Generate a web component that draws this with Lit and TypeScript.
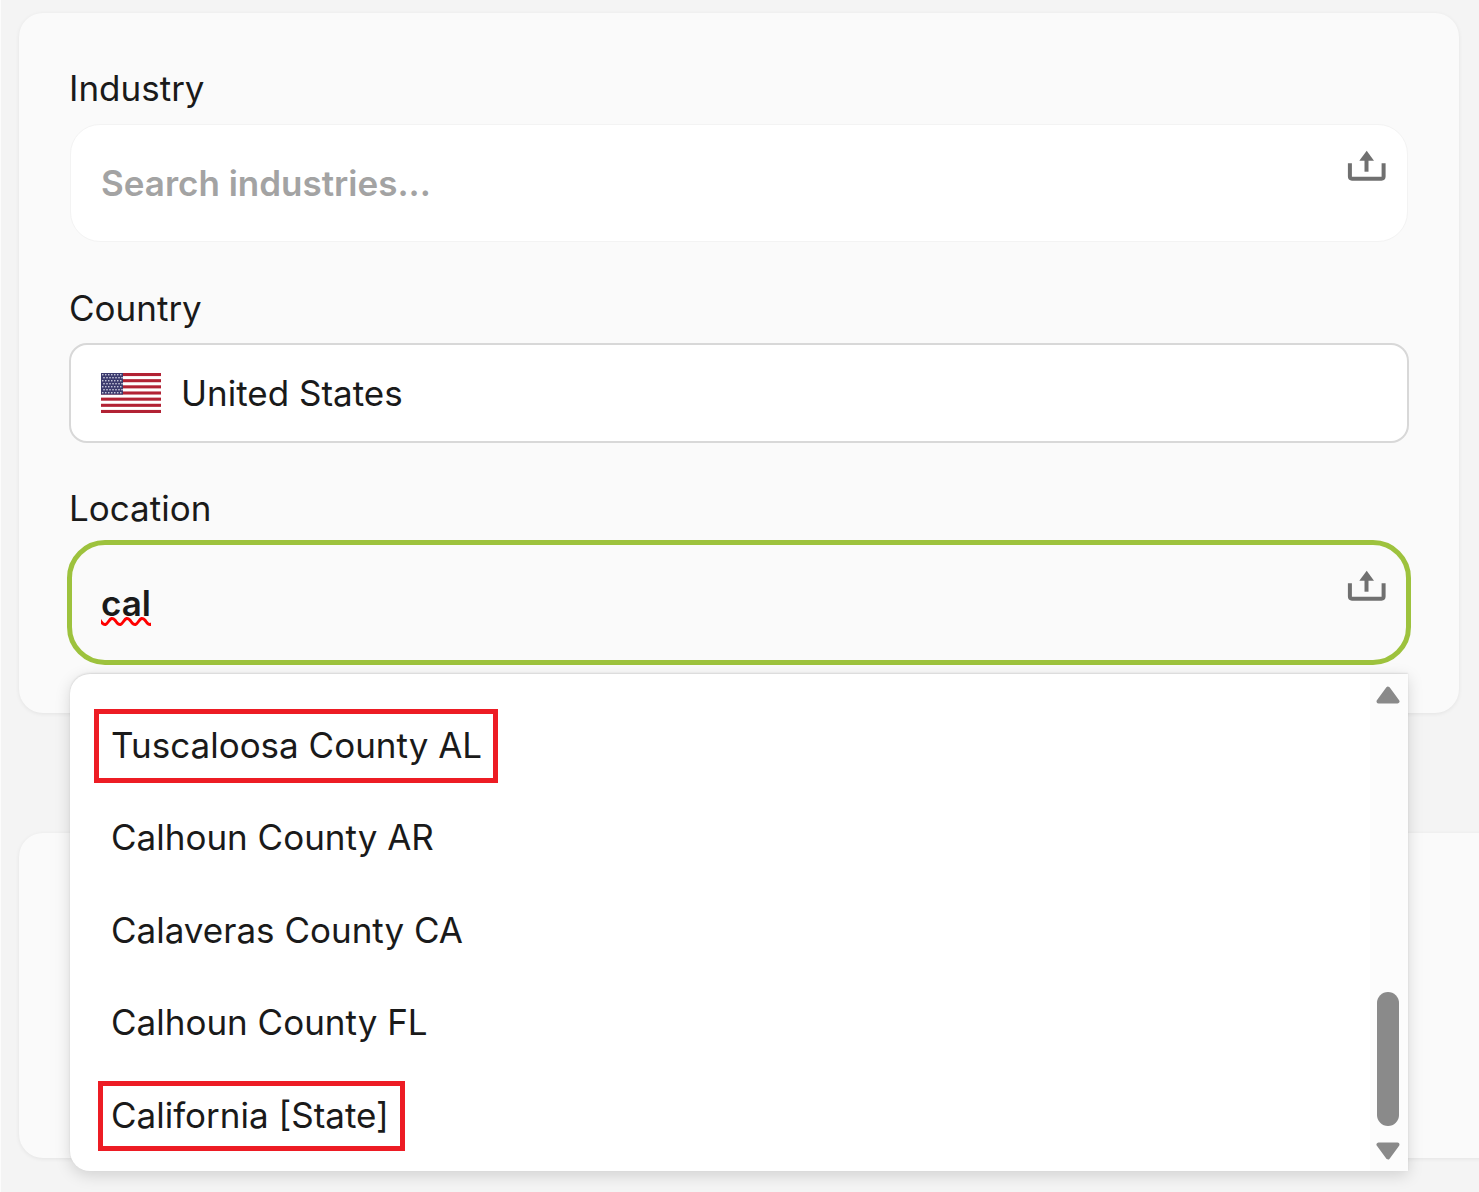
import { LitElement, html, css, svg } from "lit";
import { customElement } from "lit/decorators.js";

const uploadIcon = html`<svg class="upload" width="40" height="32" viewBox="0 0 40 32">
  <path d="M19.7 0.7 L27 10.7 H12.3 Z" fill="#707070" />
  <rect x="17.5" y="10" width="4" height="11.7" fill="#707070" />
  <path d="M2.9 13.3 V26.6 Q2.9 28.7 5 28.7 H34.5 Q36.6 28.7 36.6 26.6 V13.3" fill="none" stroke="#707070" stroke-width="4" />
</svg>`;

const stripes = [0, 1, 2, 3, 4, 5, 6];
const starRows = [0, 1, 2, 3, 4, 5, 6];

const usFlag = html`<svg class="flag" width="60" height="40" viewBox="0 0 60 40">
  <rect width="60" height="40" fill="#fff" />
  ${stripes.map(i => svg`<rect y=${i * 6.154} width="60" height="3.077" fill="#b22234" />`)}
  <rect width="22" height="21.6" fill="#3c3b6e" />
  ${starRows.map(r =>
    starRows.map(
      c => svg`<circle cx=${1.8 + c * 3 + (r % 2) * 1.2} cy=${1.8 + r * 3} r="0.8" fill="#e4e4f0" />`
    )
  )}
</svg>`;

@customElement("app-root")
class AppRoot extends LitElement {
  static styles = css`
    :host {
      display: block;
      width: 1479px;
      height: 1192px;
      overflow: hidden;
      position: relative;
      background: #f4f4f4;
      border-left: 1px solid #fcfcfc;
      box-sizing: border-box;
      font-family: Inter, "Liberation Sans", sans-serif;
      color: #1a1a1a;
    }

    * {
      box-sizing: border-box;
    }

    .page {
      display: flex;
      flex-direction: column;
      gap: 120px;
      padding: 13px 0 0 18px;
    }

    .card {
      background: #fafafa;
      border-radius: 24px;
      box-shadow: 0 1px 4px rgba(0, 0, 0, 0.07);
    }

    .form {
      width: 1440px;
      height: 700px;
      padding: 54px 50px 0 51px;
      position: relative;
    }

    .second {
      width: 1480px;
      height: 325px;
      border-radius: 24px 0 0 24px;
    }

    .label {
      font-size: 35px;
      line-height: 42px;
      height: 42px;
      margin-left: -1px;
    }

    .field {
      display: flex;
      margin-top: 14px;
      position: relative;
      font-size: 35px;
    }

    .search {
      height: 118px;
      width: 1338px;
      margin-top: 15px;
      background: #fff;
      border: 1px solid #f3f3f3;
      border-radius: 30px;
      padding: 37px 30px 0;
      color: #a3a3a3;
      font-weight: 600;
      line-height: 42px;
      margin-bottom: 45px;
    }

    .upload {
      position: absolute;
      right: 20px;
      top: 25px;
    }

    .country {
      height: 100px;
      width: 1340px;
      margin-left: -1px;
      background: #fff;
      border: 2px solid #d8d8d8;
      border-radius: 18px;
      align-items: center;
      padding: 0 30px;
      gap: 20px;
      margin-bottom: 44px;
    }

    .flag {
      display: block;
      flex: none;
    }

    .location {
      height: 125px;
      width: 1344px;
      margin-left: -3px;
      margin-top: 11px;
      background: #fafafa;
      border: 5px solid #9dc23d;
      border-radius: 38px;
      padding: 37px 29px 0;
      font-weight: 600;
      line-height: 42px;
    }

    .location .upload {
      right: 19px;
      top: 25px;
    }

    .typed {
      text-decoration: underline wavy #f00 3px;
      text-decoration-skip-ink: none;
      text-underline-offset: 1px;
    }

    .menu {
      position: absolute;
      left: 69px;
      top: 674px;
      width: 1338px;
      height: 497px;
      background: #fff;
      border-radius: 20px 0 0 20px;
      box-shadow: 0 4px 16px rgba(0, 0, 0, 0.15), 0 -1px 2px rgba(0, 0, 0, 0.1);
      display: flex;
      overflow: hidden;
    }

    .options {
      flex: 1;
      display: flex;
      flex-direction: column;
      padding: 35.25px 0 0 41px;
      gap: 20px;
    }

    .option {
      height: 72.5px;
      display: flex;
      align-items: center;
      font-size: 35px;
    }

    .option span {
      padding: 0 11px 2px 12px;
      height: 74px;
      display: flex;
      align-items: center;
      margin-left: -17px;
      border: 5px solid transparent;
    }

    .option.marked span {
      border-color: #ed1c24;
    }

    .option.state span {
      margin-left: -13px;
      padding: 0 11px 2px 8px;
      height: 70px;
    }

    .track {
      width: 38px;
      background: #fcfcfc;
      position: relative;
      flex: none;
    }

    .arrow {
      position: absolute;
      left: 6px;
      display: block;
    }

    .thumb {
      position: absolute;
      left: 7px;
      top: 318px;
      width: 22px;
      height: 134px;
      border-radius: 11px;
      background: #8a8a8a;
    }
  `;

  render() {
    return html`
      <div class="page">
        <section class="card form">
          <div class="label">Industry</div>
          <div class="field search">Search industries...${uploadIcon}</div>

          <div class="label">Country</div>
          <div class="field country">${usFlag}<span>United States</span></div>

          <div class="label">Location</div>
          <div class="field location"><span class="typed">cal</span>${uploadIcon}</div>
        </section>
        <section class="card second"></section>
      </div>
      <div class="menu">
        <div class="options">
          <div class="option marked"><span>Tuscaloosa County AL</span></div>
          <div class="option"><span>Calhoun County AR</span></div>
          <div class="option"><span>Calaveras County CA</span></div>
          <div class="option"><span>Calhoun County FL</span></div>
          <div class="option marked state"><span>California [State]</span></div>
        </div>
        <div class="track">
          <svg class="arrow" style="top:12px" width="24" height="18" viewBox="0 0 24 18">
            <path d="M12 2.5 L21.5 15.5 H2.5 Z" fill="#8a8a8a" stroke="#8a8a8a" stroke-width="4" stroke-linejoin="round" />
          </svg>
          <div class="thumb"></div>
          <svg class="arrow" style="top:468px" width="24" height="18" viewBox="0 0 24 18">
            <path d="M2.5 2.5 H21.5 L12 15.5 Z" fill="#8a8a8a" stroke="#8a8a8a" stroke-width="4" stroke-linejoin="round" />
          </svg>
        </div>
      </div>
    `;
  }
}

export { AppRoot };
